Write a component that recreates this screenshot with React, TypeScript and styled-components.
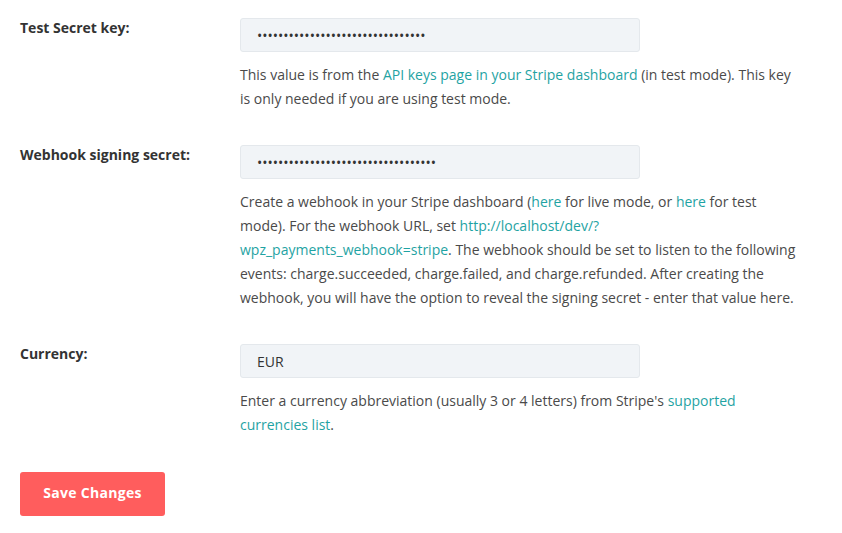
import React from 'react';
import styled, { createGlobalStyle } from 'styled-components';

const GlobalStyle = createGlobalStyle`
  body {
    margin: 0;
    background: #ffffff;
    font-family: 'Open Sans', 'Noto Sans', sans-serif;
  }
`;

export default function App() {
  return (
    <>
      <GlobalStyle />
      <Form>
        <Row>
          <Label>Test Secret key:</Label>
          <Field>
            <Input type="password" defaultValue="sk_test_abcdefghijklmnopqrstuvwx" />
            <Description>
              This value is from the <Link href="#">API keys page in your Stripe dashboard</Link> (in
              test mode). This key is only needed if you are using test mode.
            </Description>
          </Field>
        </Row>
        <Row>
          <Label>Webhook signing secret:</Label>
          <Field>
            <Input type="password" defaultValue="whsec_abcdefghijklmnopqrstuvwxyz01" />
            <Description>
              Create a webhook in your Stripe dashboard (<Link href="#">here</Link> for live mode, or{' '}
              <Link href="#">here</Link> for test mode). For the webhook URL, set{' '}
              <Link href="#">http://localhost/dev/?wpz_payments_webhook=stripe</Link>. The webhook
              should be set to listen to the following events: charge.succeeded, charge.failed, and
              charge.refunded. After creating the webhook, you will have the option to reveal the
              signing secret - enter that value here.
            </Description>
          </Field>
        </Row>
        <Row>
          <Label>Currency:</Label>
          <Field>
            <Input type="text" defaultValue="EUR" />
            <Description>
              Enter a currency abbreviation (usually 3 or 4 letters) from Stripe's{' '}
              <Link href="#">supported currencies list</Link>.
            </Description>
          </Field>
        </Row>
        <SaveButton type="button">Save Changes</SaveButton>
      </Form>
    </>
  );
}

const Form = styled.div`
  padding: 18px 20px 0 20px;
  display: flex;
  flex-direction: column;
  align-items: flex-start;
  gap: 34px;
`;

const Row = styled.div`
  display: flex;
  align-items: flex-start;
`;

const Label = styled.div`
  width: 220px;
  flex-shrink: 0;
  font-size: 14px;
  font-weight: 700;
  line-height: 20px;
  color: #333333;
`;

const Field = styled.div`
  width: 560px;
  display: flex;
  flex-direction: column;
  gap: 11px;
`;

const Input = styled.input`
  box-sizing: border-box;
  width: 400px;
  height: 34px;
  padding: 0 16px;
  background: #f1f4f7;
  border: 1px solid #e4e8ec;
  border-radius: 3px;
  font-family: 'Open Sans', sans-serif;
  font-size: 14px;
  color: #333333;
  outline: none;
`;

const Description = styled.p`
  margin: 0;
  font-size: 14px;
  line-height: 24px;
  color: #4a4a4a;
`;

const Link = styled.a`
  color: #1fa3a3;
  text-decoration: none;
  word-break: break-word;
`;

const SaveButton = styled.button`
  margin-top: 1px;
  width: 145px;
  height: 44px;
  padding: 0 0 3px 0;
  border: none;
  border-radius: 3px;
  background: #ff5d5d;
  color: #ffffff;
  font-family: 'Open Sans', sans-serif;
  font-size: 14px;
  font-weight: 700;
  letter-spacing: 0.3px;
  cursor: pointer;
`;
